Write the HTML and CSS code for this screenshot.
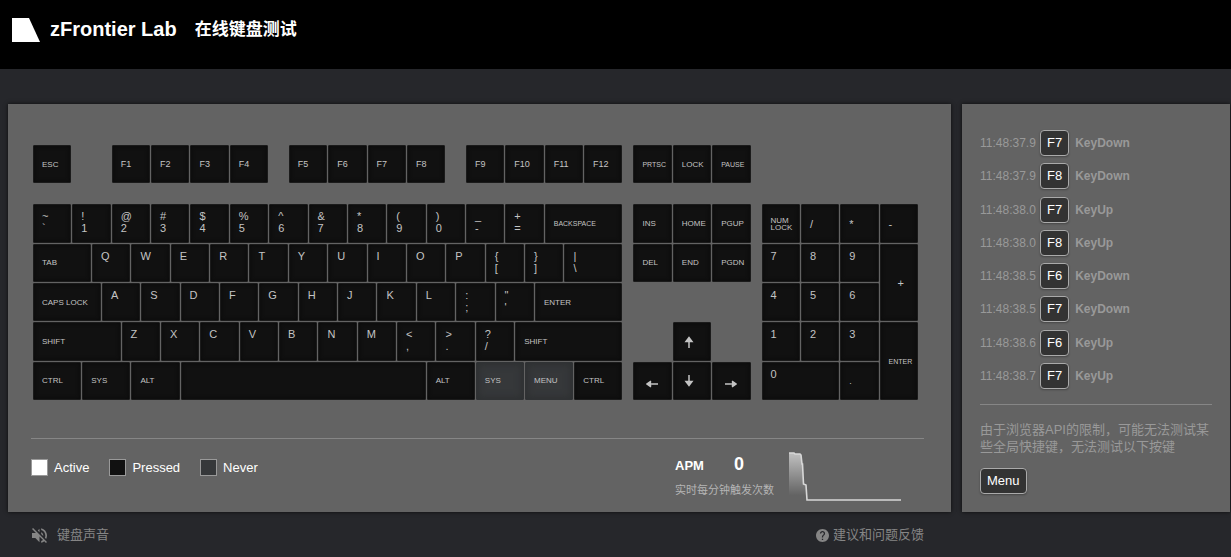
FILE: index.html
```html
<!DOCTYPE html>
<html lang="zh-CN">
<head>
<meta charset="utf-8">
<meta name="viewport" content="width=device-width, initial-scale=1">
<title>zFrontier Lab 在线键盘测试</title>
<link rel="stylesheet" href="styles.css">
</head>
<body>
<header class="header">
  <svg class="logo" viewBox="0 0 28 24" aria-hidden="true"><path d="M0 0H17L28 24H0Z" fill="#fff"/></svg>
  <span class="brand">zFrontier Lab</span>
  <h1 class="title">在线键盘测试</h1>
</header>
<main class="layout">
  <section class="panel tester">
    <div class="keyboard">
      <div class="block fn-main">
        <kbd class="key small">ESC</kbd>
        <kbd class="key fn at-9">F1</kbd><kbd class="key fn">F2</kbd><kbd class="key fn">F3</kbd><kbd class="key fn">F4</kbd>
        <kbd class="key fn at-27">F5</kbd><kbd class="key fn">F6</kbd><kbd class="key fn">F7</kbd><kbd class="key fn">F8</kbd>
        <kbd class="key fn at-45">F9</kbd><kbd class="key fn">F10</kbd><kbd class="key fn">F11</kbd><kbd class="key fn">F12</kbd>
      </div>
      <div class="block fn-nav">
        <kbd class="key tiny">PRTSC</kbd><kbd class="key small">LOCK</kbd><kbd class="key tiny">PAUSE</kbd>
      </div>
      <div class="block main-keys">
        <kbd class="key char">~<br>`</kbd><kbd class="key char">!<br>1</kbd><kbd class="key char">@<br>2</kbd><kbd class="key char">#<br>3</kbd><kbd class="key char">$<br>4</kbd><kbd class="key char">%<br>5</kbd><kbd class="key char">^<br>6</kbd><kbd class="key char">&amp;<br>7</kbd><kbd class="key char">*<br>8</kbd><kbd class="key char">(<br>9</kbd><kbd class="key char">)<br>0</kbd><kbd class="key char">_<br>-</kbd><kbd class="key char">+<br>=</kbd><kbd class="key tiny w8">BACKSPACE</kbd>

        <kbd class="key small w6">TAB</kbd><kbd class="key char">Q</kbd><kbd class="key char">W</kbd><kbd class="key char">E</kbd><kbd class="key char">R</kbd><kbd class="key char">T</kbd><kbd class="key char">Y</kbd><kbd class="key char">U</kbd><kbd class="key char">I</kbd><kbd class="key char">O</kbd><kbd class="key char">P</kbd><kbd class="key char">{<br>[</kbd><kbd class="key char">}<br>]</kbd><kbd class="key char w6">|<br>\</kbd>

        <kbd class="key small w7">CAPS LOCK</kbd><kbd class="key char">A</kbd><kbd class="key char">S</kbd><kbd class="key char">D</kbd><kbd class="key char">F</kbd><kbd class="key char">G</kbd><kbd class="key char">H</kbd><kbd class="key char">J</kbd><kbd class="key char">K</kbd><kbd class="key char">L</kbd><kbd class="key char">:<br>;</kbd><kbd class="key char">"<br>'</kbd><kbd class="key small w9">ENTER</kbd>

        <kbd class="key small w9">SHIFT</kbd><kbd class="key char">Z</kbd><kbd class="key char">X</kbd><kbd class="key char">C</kbd><kbd class="key char">V</kbd><kbd class="key char">B</kbd><kbd class="key char">N</kbd><kbd class="key char">M</kbd><kbd class="key char">&lt;<br>,</kbd><kbd class="key char">&gt;<br>.</kbd><kbd class="key char">?<br>/</kbd><kbd class="key small w11">SHIFT</kbd>

        <kbd class="key small w5">CTRL</kbd><kbd class="key small w5">SYS</kbd><kbd class="key small w5">ALT</kbd><kbd class="key w25"></kbd><kbd class="key small w5">ALT</kbd><kbd class="key small w5 never">SYS</kbd><kbd class="key small w5 never">MENU</kbd><kbd class="key small w5">CTRL</kbd>
      </div>
      <div class="block nav-keys">
        <kbd class="key small">INS</kbd><kbd class="key small">HOME</kbd><kbd class="key small">PGUP</kbd>
        <kbd class="key small">DEL</kbd><kbd class="key small">END</kbd><kbd class="key small">PGDN</kbd>
        <kbd class="key arrow up"><svg viewBox="0 0 12 12"><path d="M6 12V3M3 5.500 6 1.500 9 5.500Z"/></svg></kbd>
        <kbd class="key arrow left"><svg viewBox="0 0 12 12"><path d="M12 6H3M5 3.200 1 6 5 8.800M5 4 3 6 5 8"/></svg></kbd>
        <kbd class="key arrow down"><svg viewBox="0 0 12 12"><path d="M6 0V9M3 6.500 6 10.500 9 6.500Z"/></svg></kbd>
        <kbd class="key arrow right"><svg viewBox="0 0 12 12"><path d="M0 6H9M7 3.200 11 6 7 8.800M7 4 9 6 7 8"/></svg></kbd>
      </div>
      <div class="block pad-keys">
        <kbd class="key small">NUM<br>LOCK</kbd><kbd class="key sym">/</kbd><kbd class="key sym">*</kbd><kbd class="key sym">-</kbd>
        <kbd class="key char">7</kbd><kbd class="key char">8</kbd><kbd class="key char">9</kbd><kbd class="key sym tall plus">+</kbd>
        <kbd class="key char">4</kbd><kbd class="key char">5</kbd><kbd class="key char">6</kbd>
        <kbd class="key char">1</kbd><kbd class="key char">2</kbd><kbd class="key char">3</kbd><kbd class="key tiny tall">ENTER</kbd>
        <kbd class="key char wide">0</kbd><kbd class="key fn">.</kbd>
      </div>
    </div>
    <div class="status">
      <ul class="legend">
        <li><span class="swatch active"></span>Active</li>
        <li><span class="swatch pressed"></span>Pressed</li>
        <li><span class="swatch unused"></span>Never</li>
      </ul>
      <div class="apm">
        <div class="apm-row"><span class="apm-name">APM</span><span class="apm-value">0</span></div>
        <div class="apm-note">实时每分钟触发次数</div>
      </div>
      <svg class="chart" viewBox="0 0 113 52" aria-hidden="true">
        <defs><linearGradient id="fade" x1="0" y1="0" x2="0" y2="1"><stop offset="0" stop-color="#fff" stop-opacity=".6"/><stop offset=".9" stop-color="#fff" stop-opacity="0"/></linearGradient></defs>
        <path d="M0 2H5L6 3H11L12 4L13 13H13.500L14.500 33L17 34L18 49H0Z" fill="url(#fade)"/>
        <path d="M0 2H5L6 3H11L12 4L13 13H13.500L14.500 33L17 34L18 49H112" fill="none" stroke="#d8d8d8" stroke-width="1.600"/>
      </svg>
    </div>
  </section>
  <aside class="panel side">
    <ol class="log">
      <li><time>11:48:37.9</time><kbd class="cap">F7</kbd><b>KeyDown</b></li>
      <li><time>11:48:37.9</time><kbd class="cap">F8</kbd><b>KeyDown</b></li>
      <li><time>11:48:38.0</time><kbd class="cap">F7</kbd><b>KeyUp</b></li>
      <li><time>11:48:38.0</time><kbd class="cap">F8</kbd><b>KeyUp</b></li>
      <li><time>11:48:38.5</time><kbd class="cap">F6</kbd><b>KeyDown</b></li>
      <li><time>11:48:38.5</time><kbd class="cap">F7</kbd><b>KeyDown</b></li>
      <li><time>11:48:38.6</time><kbd class="cap">F6</kbd><b>KeyUp</b></li>
      <li><time>11:48:38.7</time><kbd class="cap">F7</kbd><b>KeyUp</b></li>
    </ol>
    <div class="limits">
      <p>由于浏览器API的限制，可能无法测试某些全局快捷键，无法测试以下按键</p>
      <kbd class="cap">Menu</kbd>
    </div>
  </aside>
  <footer class="footer">
    <button class="sound" type="button">
      <svg viewBox="3 3 18 18" aria-hidden="true"><path d="M16.500 12c0-1.770-1.020-3.290-2.500-4.030v2.210l2.450 2.450c.030-.200.050-.410.050-.630zm2.500 0c0 .940-.200 1.820-.540 2.640l1.510 1.510C20.630 14.910 21 13.500 21 12c0-4.280-2.990-7.860-7-8.770v2.060c2.890.860 5 3.540 5 6.710zM4.270 3 3 4.270 7.730 9H3v6h4l5 5v-6.730l4.250 4.250c-.670.520-1.420.930-2.250 1.180v2.060c1.380-.310 2.630-.950 3.690-1.810L19.730 21 21 19.730l-9-9L4.270 3zM12 4 9.910 6.090 12 8.180V4z"/></svg>
      <span>键盘声音</span>
    </button>
    <a class="feedback" href="#feedback">
      <svg viewBox="2 2 20 20" aria-hidden="true"><path d="M12 2C6.480 2 2 6.480 2 12s4.480 10 10 10 10-4.480 10-10S17.520 2 12 2zm1 17h-2v-2h2v2zm2.070-7.750-.900.920C13.450 12.900 13 13.500 13 15h-2v-.500c0-1.100.450-2.100 1.170-2.830l1.240-1.260c.370-.360.590-.860.590-1.410 0-1.100-.900-2-2-2s-2 .900-2 2H8c0-2.210 1.790-4 4-4s4 1.790 4 4c0 .880-.360 1.680-.930 2.250z"/></svg>
      <span>建议和问题反馈</span>
    </a>
  </footer>
</main>
</body>
</html>
```

FILE: styles.css
```css
* { box-sizing: border-box; }

body {
  margin: 0;
  min-height: 100vh;
  background: #26272b;
  color: #fff;
  font-family: "Liberation Sans", "Noto Sans CJK SC", sans-serif;
}

kbd { font-family: inherit; }
ul, ol { list-style: none; margin: 0; padding: 0; }

.header {
  display: flex;
  align-items: center;
  height: 69px;
  padding: 0 12px 10px;
  background: #000;
}
.logo { width: 28px; height: 24px; }
.brand {
  margin-left: 10px;
  font-size: 20px;
  font-weight: 700;
}
.title {
  margin: 0 0 0 18px;
  font-size: 17px;
  line-height: 24px;
}

.layout {
  display: grid;
  grid-template-columns: minmax(0, 1fr) 268px;
  column-gap: 11px;
  padding: 35px 1px 0 8px;
}
.panel {
  background: #636363;
  box-shadow: 0 0 4px rgba(0, 0, 0, 0.7);
}

.tester { padding: 41px 27px 9px 23px; }
.keyboard {
  display: grid;
  grid-template-columns: 15fr 3fr 4fr;
  gap: 20px 10px;
  padding: 0 5px 0 2px;
}
.block {
  display: grid;
  grid-auto-rows: minmax(0, 1fr);
}
.fn-main { grid-template-columns: repeat(60, minmax(0, 1fr)); aspect-ratio: 15; }
.fn-nav { grid-template-columns: repeat(3, minmax(0, 1fr)); aspect-ratio: 3; }
.main-keys {
  grid-column: 1;
  grid-template-columns: repeat(60, minmax(0, 1fr));
  aspect-ratio: 3;
}
.nav-keys {
  grid-template: repeat(5, minmax(0, 1fr)) / repeat(3, minmax(0, 1fr));
  aspect-ratio: 3 / 5;
}
.pad-keys {
  grid-template: repeat(5, minmax(0, 1fr)) / repeat(4, minmax(0, 1fr));
  aspect-ratio: 4 / 5;
}

.key {
  display: flex;
  align-items: center;
  margin: 0 1px 1px 0;
  padding-left: 8px;
  border: 1px solid #1b1b1b;
  border-radius: 1px;
  background: #111;
  box-shadow: inset 0 0 4px #0a0a0a;
  color: #c4c4c4;
  white-space: nowrap;
}
.fn-main .key, .main-keys .key { grid-column-end: span 4; }
.fn-main .at-9 { grid-column-start: 9; }
.fn-main .at-27 { grid-column-start: 27; }
.fn-main .at-45 { grid-column-start: 45; }
.main-keys .w5 { grid-column-end: span 5; }
.main-keys .w6 { grid-column-end: span 6; }
.main-keys .w7 { grid-column-end: span 7; }
.main-keys .w8 { grid-column-end: span 8; }
.main-keys .w9 { grid-column-end: span 9; }
.main-keys .w11 { grid-column-end: span 11; }
.main-keys .w25 { grid-column-end: span 25; }
.tall { grid-row-end: span 2; }
.wide { grid-column-end: span 2; }

.char {
  display: block;
  padding-top: 5px;
  font-size: 11px;
  line-height: 12px;
}
.sym { font-size: 11px; }
.fn { font-size: 9px; }
.small { font-size: 8px; line-height: 7px; }
.tiny { font-size: 7px; }
.plus { padding-left: 17px; }
.never {
  border-color: #303234;
  background: #36383a;
  box-shadow: inset 0 0 6px 2px #2e3032;
}
.arrow svg {
  width: 12px;
  height: 12px;
  fill: #c4c4c4;
  stroke: #c4c4c4;
  stroke-width: 1.5px;
}
.up { grid-area: 4 / 2; padding-left: 9px; }
.left { grid-area: 5 / 1; padding: 6px 0 0 12px; }
.down { grid-area: 5 / 2; padding-left: 9px; }
.right { grid-area: 5 / 3; padding: 6px 0 0 12px; }

.status {
  display: flex;
  align-items: flex-start;
  margin-top: 37px;
  padding: 12px 22px 0 0;
  border-top: 1px solid #868686;
}
.legend {
  display: flex;
  gap: 20px;
  margin: 8px auto 0 0;
  font-size: 13px;
  line-height: 17px;
}
.legend li { display: flex; gap: 6px; }
.swatch {
  width: 17px;
  height: 17px;
  border: 1px solid #999;
}
.active { background: #fff; }
.pressed { background: #111; }
.unused { background: #36383a; }

.apm { margin-right: 15px; }
.apm-row {
  display: flex;
  align-items: baseline;
  gap: 30px;
  font-weight: 700;
  line-height: 26px;
}
.apm-name { font-size: 13px; }
.apm-value { font-size: 18px; }
.apm-note {
  color: #b5b5b5;
  font-size: 11px;
  line-height: 22px;
}
.chart { width: 113px; height: 52px; }

.side {
  display: flex;
  flex-direction: column;
  padding: 26px 18px 18px;
}
.log {
  display: flex;
  flex: 1;
  flex-direction: column;
  justify-content: space-between;
  color: #999;
  font-size: 12px;
}
.log li { display: flex; align-items: center; }
.log time { width: 60px; }
.log b { margin-left: 6px; }
.cap {
  display: inline-block;
  padding: 0 6px;
  border: 1px solid #aaa;
  border-radius: 4px;
  background: #333;
  box-shadow: 0 1px 2px rgba(0, 0, 0, 0.3);
  color: #fff;
  font-size: 13px;
  line-height: 24px;
}
.limits {
  margin-top: 15px;
  padding-top: 16px;
  border-top: 1px solid #868686;
  color: #999;
  font-size: 13px;
}
.limits p { margin: 0 0 13px; line-height: 17px; }

.footer {
  display: flex;
  justify-content: space-between;
  align-items: center;
  padding: 13px 27px 0 24px;
}
.sound, .feedback {
  display: flex;
  align-items: center;
  padding: 0;
  border: 0;
  background: none;
  color: #858585;
  font: inherit;
  font-size: 13px;
  line-height: 20px;
  text-decoration: none;
}
.sound { gap: 10px; }
.feedback { gap: 4px; }
.sound svg { width: 15px; height: 15px; fill: currentColor; }
.feedback svg { width: 13px; height: 13px; fill: currentColor; }
```
